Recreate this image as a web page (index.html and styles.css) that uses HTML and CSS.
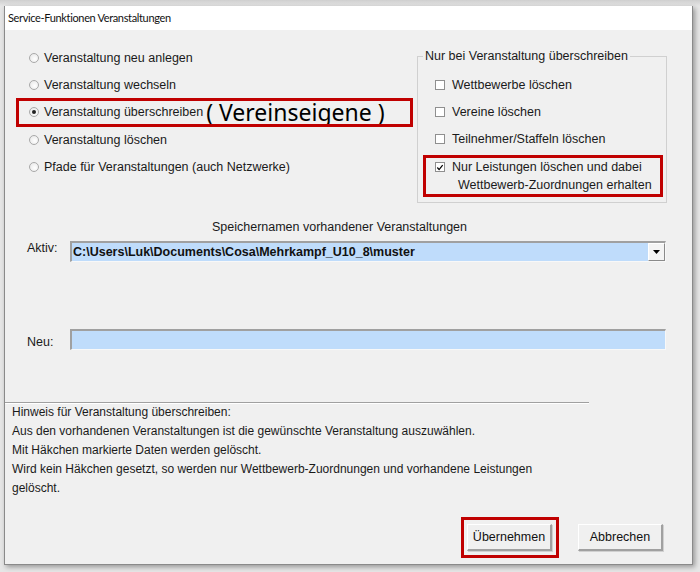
FILE: index.html
```html
<!DOCTYPE html>
<html lang="de">
<head>
    <meta charset="UTF-8">
    <title>Service-Funktionen Veranstaltungen</title>
    <link rel="stylesheet" href="styles.css">
</head>
<body>
    <div class="dialog">
        <div class="titlebar">Service-Funktionen Veranstaltungen</div>
        <div class="client">
            <div class="top">
                <ul class="options">
                    <li><span class="radio"></span>Veranstaltung neu anlegen</li>
                    <li><span class="radio"></span>Veranstaltung wechseln</li>
                    <li class="marked">
                        <span class="radio on"></span>Veranstaltung überschreiben
                        <span class="note">( Vereinseigene )</span>
                        <span class="frame"></span>
                    </li>
                    <li><span class="radio"></span>Veranstaltung löschen</li>
                    <li><span class="radio"></span>Pfade für Veranstaltungen (auch Netzwerke)</li>
                </ul>
                <fieldset class="group">
                    <legend>Nur bei Veranstaltung überschreiben</legend>
                    <div class="checks">
                        <div class="check"><span class="box"></span>Wettbewerbe löschen</div>
                        <div class="check"><span class="box"></span>Vereine löschen</div>
                        <div class="check"><span class="box"></span>Teilnehmer/Staffeln löschen</div>
                        <div class="check two marked">
                            <span class="box on">
                                <svg width="9" height="9" viewBox="0 0 9 9"><path d="M1.5 4.5 L3.5 6.8 L7.5 1.8" fill="none" stroke="#000" stroke-width="1.4"/></svg>
                            </span>
                            <div>Nur Leistungen löschen und dabei<br><span class="indent">Wettbewerb-Zuordnungen erhalten</span></div>
                            <span class="frame"></span>
                        </div>
                    </div>
                </fieldset>
            </div>

            <div class="names">Speichernamen vorhandener Veranstaltungen</div>

            <div class="field aktiv">
                <label>Aktiv:</label>
                <div class="combo">
                    <span class="value">C:\Users\Luk\Documents\Cosa\Mehrkampf_U10_8\muster</span>
                    <span class="drop"><svg width="7" height="4" viewBox="0 0 7 4"><path d="M0 0 H7 L3.5 4 Z" fill="#000"/></svg></span>
                </div>
            </div>

            <div class="field neu">
                <label>Neu:</label>
                <div class="combo"></div>
            </div>

            <div class="rule"></div>
            <div class="hint">
                Hinweis für Veranstaltung überschreiben:<br>
                Aus den vorhandenen Veranstaltungen ist die gewünschte Veranstaltung auszuwählen.<br>
                Mit Häkchen markierte Daten werden gelöscht.<br>
                Wird kein Häkchen gesetzt, so werden nur Wettbewerb-Zuordnungen und vorhandene Leistungen<br>
                gelöscht.
            </div>

            <div class="buttons">
                <button class="btn marked">Übernehmen<span class="frame"></span></button>
                <button class="btn">Abbrechen</button>
            </div>
        </div>
    </div>
</body>
</html>
```

FILE: styles.css
```css
*{
    margin: 0;
    padding: 0;
    box-sizing: border-box;
}
body{
    background: linear-gradient(#cfcfcf, #e6e6e6 6px) #dcdcdc;
    font-family: "Liberation Sans", Arial, sans-serif;
    font-size: 12.5px;
    color: #1a1a1a;
    height: 572px;
    overflow: hidden;
}
.dialog{
    margin: 6px 0 0 4px;
    width: 689px;
    border: 1px solid #8a8a8a;
    border-top: none;
    box-shadow: 2px 2px 5px rgba(0, 0, 0, 0.35);
    background-color: #f0f0f0;
}
.titlebar{
    height: 24px;
    line-height: 24px;
    background-color: #fff;
    padding-left: 3px;
    font-family: Lato, "Open Sans", sans-serif;
    font-size: 11px;
    letter-spacing: -0.35px;
    color: #111;
}
.client{
    height: 534px;
    background-color: #f0f0f0;
}
.top{
    display: flex;
    justify-content: space-between;
}

/* radio list */
.options{
    list-style: none;
    margin: 14px 0 0 24px;
}
.options li{
    height: 27px;
    display: flex;
    align-items: center;
    position: relative;
}
.options li.marked{
    height: 28px;
}
.radio{
    width: 10px;
    height: 10px;
    border-radius: 50%;
    border: 1px solid #a9a9a9;
    background: radial-gradient(circle at 60% 60%, #fff, #e4e4e4);
    margin-right: 5px;
    display: flex;
    align-items: center;
    justify-content: center;
}
.radio.on::after{
    content: "";
    width: 4px;
    height: 4px;
    border-radius: 50%;
    background-color: #222;
}
.note{
    font-family: "Noto Sans", "Open Sans", sans-serif;
    font-size: 23px;
    color: #000;
    margin-left: 3px;
    white-space: pre;
}
.frame{
    position: absolute;
    border: 3px solid #c00000;
    pointer-events: none;
}
.options .frame{
    left: -13px;
    top: 0;
    width: 397px;
    height: 29px;
}

/* group box */
.group{
    width: 250px;
    margin: 18px 25px 0 0;
    border: 1px solid #d0d0d0;
    padding: 0 0 8px 0;
    min-inline-size: 0;
}
.group legend{
    margin-left: 5px;
    padding: 0 2px;
    line-height: 16px;
}
.checks{
    padding: 7px 0 0 17px;
}
.check{
    height: 27px;
    display: flex;
    align-items: center;
    position: relative;
}
.box{
    width: 10px;
    height: 10px;
    border: 1px solid #8f8f8f;
    background-color: #fff;
    margin-right: 7px;
    display: flex;
    align-items: center;
    justify-content: center;
}
.check.two{
    height: 36px;
    margin-top: 6px;
    align-items: flex-start;
    line-height: 18px;
}
.check.two .box{
    margin-top: 4px;
}
.indent{
    padding-left: 6px;
}
.check .frame{
    left: -12px;
    top: -3px;
    width: 240px;
    height: 42px;
}

/* names */
.names{
    margin: 16px 25px 0 7px;
    text-align: center;
    line-height: 16px;
}
.field{
    display: flex;
    align-items: flex-start;
}
.field label{
    width: 43px;
    margin-left: 22px;
    line-height: 14px;
}
.aktiv{
    margin-top: 6px;
}
.neu{
    margin-top: 67px;
}
.neu label{
    margin-top: 6px;
}
.combo{
    width: 596px;
    height: 21px;
    border-style: solid;
    border-width: 2px 1px 1px 2px;
    border-color: #a0a0a0 #f8f8f8 #f8f8f8 #a0a0a0;
    background-color: #bfdcfb;
    display: flex;
    align-items: center;
    justify-content: space-between;
}
.value{
    padding-left: 1px;
    font-weight: bold;
    font-size: 12.5px;
    color: #111;
}
.drop{
    width: 17px;
    height: 18px;
    background-color: #f4f4f4;
    border-style: solid;
    border-width: 1px;
    border-color: #fff #8a8a8a #8a8a8a #fff;
    display: flex;
    align-items: center;
    justify-content: center;
}

/* hint */
.rule{
    width: 584px;
    height: 2px;
    margin-top: 52px;
    border-top: 1px solid #a0a0a0;
    border-bottom: 1px solid #fff;
}
.hint{
    margin-top: -1px;
    padding-left: 7px;
    line-height: 19px;
    font-size: 12px;
}

/* buttons */
.buttons{
    display: flex;
    justify-content: flex-end;
    gap: 26px;
    margin: 26px 29px 0 0;
}
.btn{
    position: relative;
    width: 85px;
    height: 27px;
    font-family: "Liberation Sans", Arial, sans-serif;
    font-size: 12.5px;
    color: #111;
    background-color: #f0f0f0;
    border-style: solid;
    border-width: 1px 2px 2px 1px;
    border-color: #fff #a0a0a0 #a0a0a0 #fff;
    box-shadow: 1px 1px 0 #d0d0d0;
}
.btn .frame{
    left: -7px;
    top: -8px;
    width: 98px;
    height: 41px;
}
```
